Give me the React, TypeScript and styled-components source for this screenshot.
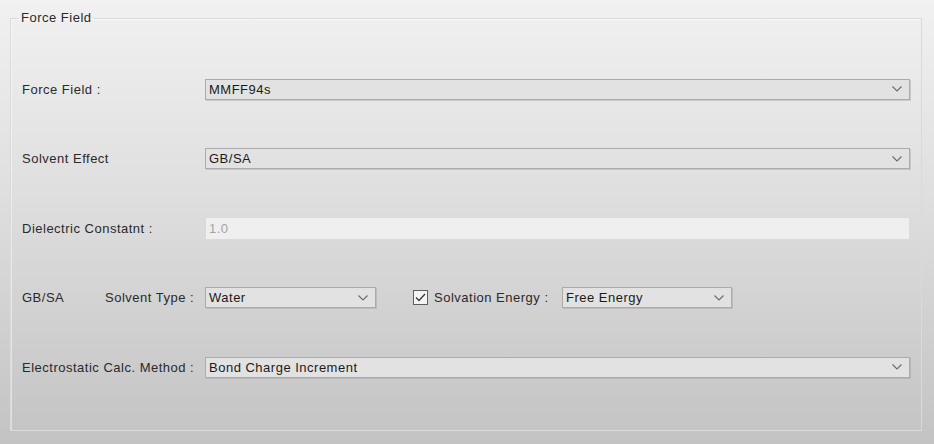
import React from "react";
import styled, { createGlobalStyle } from "styled-components";

const Global = createGlobalStyle`
  html, body { margin: 0; padding: 0; }
  body {
    font-family: "Liberation Sans", Arial, sans-serif;
    font-size: 13px;
    color: #2a2a2a;
  }
`;

const Page = styled.div`
  box-sizing: border-box;
  width: 934px;
  height: 444px;
  padding: 11px 12px 0 10px;
  background: linear-gradient(to bottom, #f1f1f1 0%, #dedede 45%, #c3c3c3 100%);
  overflow: hidden;
`;

const Group = styled.fieldset`
  box-sizing: border-box;
  margin: 0;
  width: 912px;
  height: 420px;
  padding: 0 11px 0 11px;
  border: 1px solid #dadada;
  box-shadow: inset 1px 1px 0 rgba(255, 255, 255, 0.45);
  min-width: 0;
`;

const Legend = styled.legend`
  margin-left: -3px;
  padding: 0 2px;
  font-size: 13px;
  line-height: 14px;
  letter-spacing: 0.5px;
  color: #2a2a2a;
`;

const Rows = styled.div`
  display: flex;
  flex-direction: column;
  gap: 45.5px;
  padding-top: 52px;
`;

const Row = styled.div`
  display: flex;
  align-items: center;
  height: 24px;
`;

const Label = styled.span<{ $w: number }>`
  flex: 0 0 ${(p) => p.$w}px;
  letter-spacing: 0.5px;
  white-space: nowrap;
`;

const Combo = styled.div<{ $w?: number }>`
  box-sizing: border-box;
  ${(p) => (p.$w ? `flex: 0 0 ${p.$w}px;` : "flex: 1 1 auto;")}
  height: 21px;
  display: flex;
  align-items: center;
  justify-content: space-between;
  padding: 0 7px 0 3px;
  background: #e2e2e2;
  border: 1px solid #ababab;
  box-shadow: 1px 1px 0 rgba(150, 150, 150, 0.35);
  letter-spacing: 0.5px;
  color: #1a1a1a;
`;

const TextInput = styled.div`
  box-sizing: border-box;
  flex: 1 1 auto;
  height: 23px;
  display: flex;
  align-items: center;
  padding: 0 3px;
  background: #efefef;
  border: 1px solid #dadada;
  color: #a4a4a4;
  letter-spacing: 0.5px;
`;

const Check = styled.span`
  box-sizing: border-box;
  flex: 0 0 15px;
  width: 15px;
  height: 15px;
  margin-left: 37px;
  margin-right: 6px;
  border: 1px solid #5e5e5e;
  background: #f4f4f4;
  display: flex;
  align-items: center;
  justify-content: center;
`;

const Chevron = () => (
  <svg width="10" height="6" viewBox="0 0 10 6">
    <path d="M0.5 0.5 L5 5 L9.5 0.5" fill="none" stroke="#6a6a6a" strokeWidth="1.1" />
  </svg>
);

const Select = ({ value, w }: { value: string; w?: number }) => (
  <Combo $w={w}>
    <span>{value}</span>
    <Chevron />
  </Combo>
);

export default function App() {
  return (
    <>
      <Global />
      <Page>
        <Group>
          <Legend>Force Field</Legend>
          <Rows>
            <Row>
              <Label $w={183}>Force Field :</Label>
              <Select value="MMFF94s" />
            </Row>
            <Row>
              <Label $w={183}>Solvent Effect</Label>
              <Select value="GB/SA" />
            </Row>
            <Row>
              <Label $w={183}>Dielectric Constatnt :</Label>
              <TextInput>1.0</TextInput>
            </Row>
            <Row>
              <Label $w={83}>GB/SA</Label>
              <Label $w={100}>Solvent Type :</Label>
              <Select value="Water" w={171} />
              <Check>
                <svg width="11" height="9" viewBox="0 0 11 9">
                  <path d="M1 4.5 L4 7.5 L10 1" fill="none" stroke="#3a3a3a" strokeWidth="1.3" />
                </svg>
              </Check>
              <Label $w={128}>Solvation Energy :</Label>
              <Select value="Free Energy" w={170} />
            </Row>
            <Row>
              <Label $w={183}>Electrostatic Calc. Method :</Label>
              <Select value="Bond Charge Increment" />
            </Row>
          </Rows>
        </Group>
      </Page>
    </>
  );
}
